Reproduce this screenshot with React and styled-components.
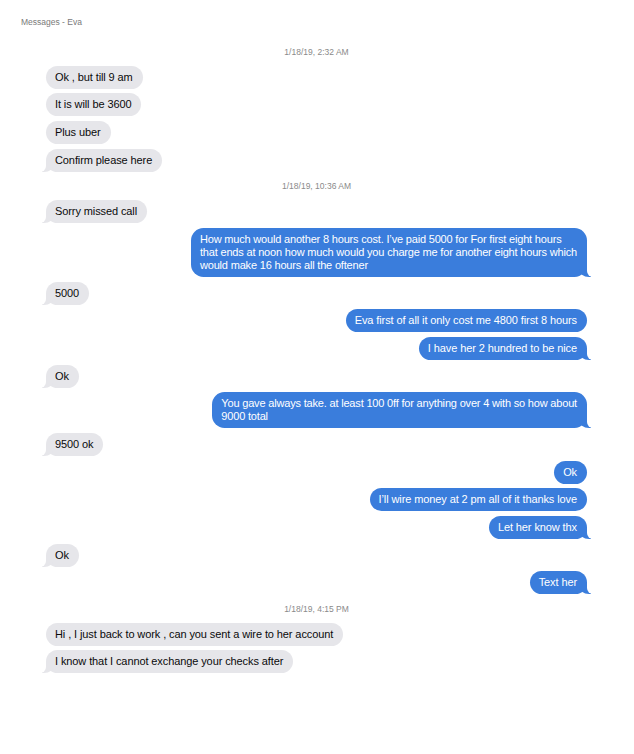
import React from "react";
import styled, { createGlobalStyle, css } from "styled-components";

const BLUE = "#3a7ddc";
const GRAY = "#e6e6ea";

const GlobalStyle = createGlobalStyle`
  html, body { margin: 0; padding: 0; background: #ffffff; }
  body { font-family: "Liberation Sans", Arial, sans-serif; -webkit-font-smoothing: antialiased; }
`;

const Page = styled.div`
  width: 634px;
  min-height: 754px;
  background: #ffffff;
  box-sizing: border-box;
  padding: 17px 47px 40px 46px;
`;

const Header = styled.div`
  font-size: 8.5px;
  line-height: 11px;
  color: #7a7a7a;
  margin-left: -25px;
`;

const Thread = styled.div`
  display: flex;
  flex-direction: column;
  gap: 4.7px;
  margin-top: 14px;
`;

const Stamp = styled.div`
  height: 19px;
  display: flex;
  align-items: center;
  justify-content: center;
  font-size: 8.5px;
  color: #8a8a8a;
`;

const Row = styled.div`
  display: flex;
  justify-content: ${(p) => (p.$me ? "flex-end" : "flex-start")};
`;

const tailMe = css`
  &::before {
    content: "";
    position: absolute;
    bottom: 0;
    right: -4px;
    width: 12px;
    height: 12px;
    background: ${BLUE};
    border-bottom-left-radius: 10px 8px;
  }
  &::after {
    content: "";
    position: absolute;
    bottom: 0;
    right: -14px;
    width: 14px;
    height: 12px;
    background: #ffffff;
    border-bottom-left-radius: 6px;
  }
`;

const tailThem = css`
  &::before {
    content: "";
    position: absolute;
    bottom: 0;
    left: -4px;
    width: 12px;
    height: 12px;
    background: ${GRAY};
    border-bottom-right-radius: 10px 8px;
  }
  &::after {
    content: "";
    position: absolute;
    bottom: 0;
    left: -14px;
    width: 14px;
    height: 12px;
    background: #ffffff;
    border-bottom-right-radius: 6px;
  }
`;

const Bubble = styled.div`
  position: relative;
  box-sizing: border-box;
  max-width: 440px;
  padding: 5px 10px 5px 9px;
  border-radius: ${(p) => (p.$multi ? "12.5px" : "11.5px")};
  font-size: 11px;
  line-height: 13px;
  letter-spacing: ${(p) => (p.$multi ? "-0.18px" : "-0.1px")};
  white-space: nowrap;
  background: ${(p) => (p.$me ? BLUE : GRAY)};
  color: ${(p) => (p.$me ? "#ffffff" : "#0a0a0a")};
  ${(p) => p.$tail && (p.$me ? tailMe : tailThem)}
`;

const Line = styled.span`
  display: block;
`;

const items = [
  { t: "stamp", text: "1/18/19, 2:32 AM" },
  { text: ["Ok , but till 9 am"] },
  { text: ["It is will be 3600"] },
  { text: ["Plus uber"] },
  { text: ["Confirm please here"], tail: true },
  { t: "stamp", text: "1/18/19, 10:36 AM" },
  { text: ["Sorry missed call"], tail: true },
  {
    me: true,
    tail: true,
    text: [
      "How much would another 8 hours cost. I\u2019ve paid 5000 for For first eight hours",
      "that ends at noon how much would you charge me for another eight hours which",
      "would make 16 hours all the oftener",
    ],
  },
  { text: ["5000"], tail: true },
  { me: true, text: ["Eva first of all it only cost me 4800 first 8 hours"] },
  { me: true, tail: true, text: ["I have her 2 hundred to be nice"] },
  { text: ["Ok"], tail: true },
  {
    me: true,
    tail: true,
    text: [
      "You gave always take. at least 100 0ff for anything over 4 with so how about",
      "9000 total",
    ],
  },
  { text: ["9500 ok"], tail: true },
  { me: true, text: ["Ok"] },
  { me: true, text: ["I\u2019ll wire money at 2 pm all of it thanks love"] },
  { me: true, tail: true, text: ["Let her know thx"] },
  { text: ["Ok"], tail: true },
  { me: true, tail: true, text: ["Text her"] },
  { t: "stamp", text: "1/18/19, 4:15 PM" },
  { text: ["Hi , I just back to work , can you sent a wire to her account"] },
  { text: ["I know that I cannot exchange your checks after"], tail: true },
];

export default function App() {
  return (
    <>
      <GlobalStyle />
      <Page>
        <Header>Messages - Eva</Header>
        <Thread>
          {items.map((m, i) =>
            m.t === "stamp" ? (
              <Stamp key={i}>{m.text}</Stamp>
            ) : (
              <Row key={i} $me={m.me}>
                <Bubble $me={m.me} $tail={m.tail} $multi={m.text.length > 1}>
                  {m.text.map((l, j) => (
                    <Line key={j}>{l}</Line>
                  ))}
                </Bubble>
              </Row>
            )
          )}
        </Thread>
      </Page>
    </>
  );
}
